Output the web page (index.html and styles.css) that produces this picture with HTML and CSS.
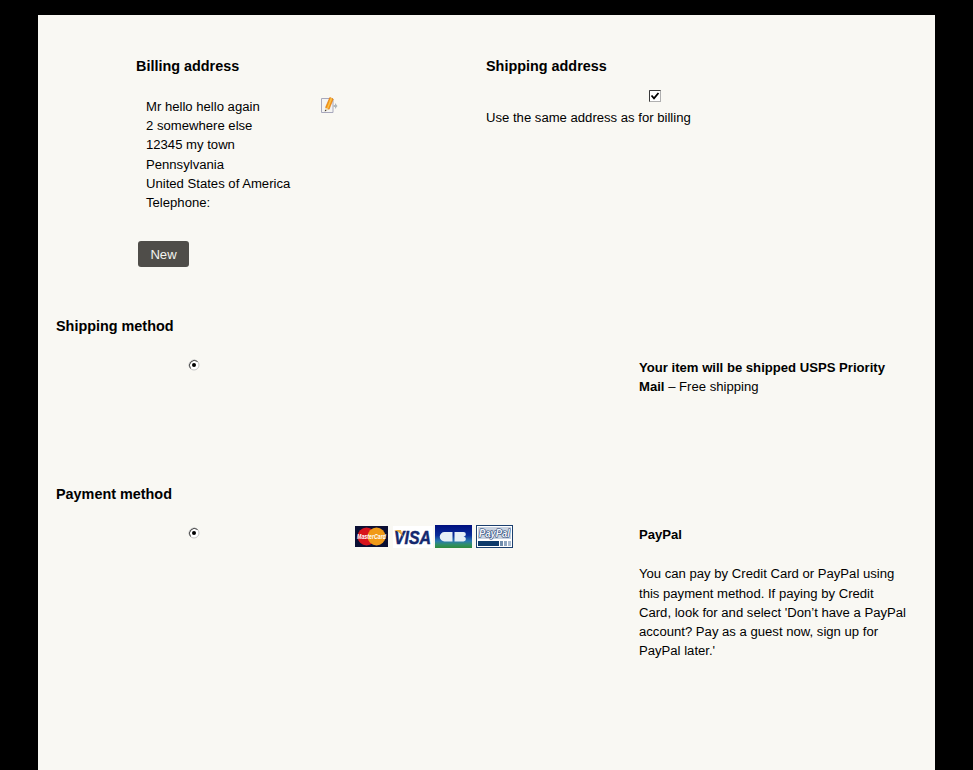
FILE: index.html
```html
<!DOCTYPE html>
<html lang="en">
<head>
<meta charset="utf-8">
<title>Checkout</title>
<link rel="stylesheet" href="styles.css">
</head>
<body>
<main class="page">
  <section class="addresses">
    <div class="billing">
      <h2 class="heading">Billing address</h2>
      <div class="address-row">
        <address class="address">
          Mr hello hello again<br>2 somewhere else<br>12345 my town<br>Pennsylvania<br>United States of America<br>Telephone:
        </address>
        <svg class="edit-icon" width="17" height="17" viewBox="0 0 17 17" aria-label="Edit">
          <path d="M.5 1.500h11l.5.500v13.500H.5z" fill="#f4f4f2" stroke="#a8a8bc"/>
          <path d="M12.500 8h1.500v-2l2.500 3-2.500 3v-2h-1.500z" fill="#b0b8bc"/>
          <path d="M4.500 10.500L8.800.5l3.400 1.500L8 12.500z" fill="#f59a14" stroke="#dc6e0a" stroke-width=".6"/>
          <path d="M9.800 .8l1.400.6L7 12l-1.200-.5z" fill="#fbc04a"/>
          <path d="M4.500 10.500L3.800 14.500 8 12.500z" fill="#e8d8b8"/>
          <path d="M3.800 14.500l.3-1.800 1.500.9z" fill="#3c3428"/>
        </svg>
      </div>
      <button class="new-button" type="button">New</button>
    </div>
    <div class="shipping">
      <h2 class="heading">Shipping address</h2>
      <div class="same-check">
        <svg class="check-icon" width="12" height="12" viewBox="0 0 12 12" aria-label="Checked">
          <rect x=".5" y=".5" width="11" height="11" fill="#fff" stroke="#b0b0b0"/>
          <path d="M.5 11.500v-11h11" fill="none" stroke="#3a3a3a"/>
          <path d="M2.500 5.500l2.500 2.800L9.500 3" fill="none" stroke="#000" stroke-width="1.800"/>
        </svg>
      </div>
      <p class="same-label">Use the same address as for billing</p>
    </div>
  </section>

  <section class="method shipping-method">
    <h2 class="heading">Shipping method</h2>
    <div class="method-row">
      <div class="radio-cell">
        <svg class="radio-icon" width="12" height="12" viewBox="0 0 12 12" aria-label="Selected">
          <circle cx="6" cy="6" r="5" fill="#fff" stroke="#c4c4c4"/>
          <path d="M2.500 9.500A5 5 0 0 1 9.500 2.500" fill="none" stroke="#444"/>
          <circle cx="6" cy="6" r="2" fill="#000"/>
        </svg>
      </div>
      <div class="logos-cell"></div>
      <div class="text-cell">
        <p class="shipping-note"><strong>Your item will be shipped USPS Priority Mail</strong> – Free shipping</p>
      </div>
    </div>
  </section>

  <section class="method payment-method">
    <h2 class="heading">Payment method</h2>
    <div class="method-row">
      <div class="radio-cell">
        <svg class="radio-icon" width="12" height="12" viewBox="0 0 12 12" aria-label="Selected">
          <circle cx="6" cy="6" r="5" fill="#fff" stroke="#c4c4c4"/>
          <path d="M2.500 9.500A5 5 0 0 1 9.500 2.500" fill="none" stroke="#444"/>
          <circle cx="6" cy="6" r="2" fill="#000"/>
        </svg>
      </div>
      <div class="logos-cell">
        <svg class="cards" width="160" height="24" viewBox="0 0 160 24" aria-label="Accepted cards">
          <defs>
            <linearGradient id="cb-fill" x1="0" y1="0" x2="0" y2="1">
              <stop offset="0" stop-color="#00107e"/>
              <stop offset=".45" stop-color="#0a2c9a"/>
              <stop offset=".7" stop-color="#2a7ab0"/>
              <stop offset=".85" stop-color="#2f8f68"/>
              <stop offset="1" stop-color="#2f8a3c"/>
            </linearGradient>
          </defs>
          <rect x="0" y="1" width="33" height="21" fill="#0b0f33"/>
          <circle cx="11.500" cy="11.500" r="9" fill="#d8141c"/>
          <circle cx="21.500" cy="11.500" r="9" fill="#f09a18"/>
          <text class="mc-word" x="16.500" y="14" text-anchor="middle" textLength="29" lengthAdjust="spacingAndGlyphs">MasterCard</text>
          <rect x="38" y="1" width="40" height="22" fill="#fff"/>
          <text class="visa-word" x="39" y="19" textLength="37" lengthAdjust="spacingAndGlyphs">VISA</text>
          <path d="M39 5h7l2 7c-2-3-5-6-9-7z" fill="#e8a93a"/>
          <rect x="80" y="0" width="37" height="23" fill="url(#cb-fill)"/>
          <path d="M97.500 7h-8a4.500 4.500 0 0 0 0 9.500h8zM99.500 7h9a2.300 2.300 0 0 1 0 4.700 2.300 2.300 0 0 1 0 4.800h-9z" fill="#e6f0f6"/>
          <rect x="121.500" y="0.500" width="36" height="22" fill="#fff" stroke="#1b3f6e"/>
          <rect x="123" y="2" width="33" height="12" fill="#c8d2e0"/>
          <text class="pp-word" x="139.500" y="12" text-anchor="middle" textLength="31" lengthAdjust="spacingAndGlyphs">PayPal</text>
          <rect x="123" y="16" width="21" height="5" fill="#0e3a6a"/>
          <rect x="145" y="16" width="3" height="5" fill="#6f8cab"/>
          <rect x="149" y="16" width="3" height="5" fill="#8fa6c0"/>
          <rect x="153" y="16" width="3" height="5" fill="#a9bbd0"/>
        </svg>
      </div>
      <div class="text-cell">
        <p class="paypal-title"><strong>PayPal</strong></p>
        <p class="paypal-copy">You can pay by Credit Card or PayPal using this payment method. If paying by Credit Card, look for and select 'Don’t have a PayPal account? Pay as a guest now, sign up for PayPal later.'</p>
      </div>
    </div>
  </section>
</main>
</body>
</html>
```
FILE: styles.css
```css
* { box-sizing: border-box; }

html, body {
  margin: 0;
  background: #000;
}

body {
  padding: 15px 38px 0;
  height: 770px;
  overflow: hidden;
  color: #000;
  font: 13.12px/19.2px "Liberation Sans", Arial, sans-serif;
}

.page {
  height: 755px;
  background: #f9f8f3;
  padding-top: 41px;
}

.heading {
  margin: 0;
  font-size: 14.4px;
  line-height: 20px;
  font-weight: bold;
}

.addresses {
  display: grid;
  grid-template-columns: 350px 1fr;
  padding-left: 98px;
}

.address-row {
  display: flex;
  align-items: flex-start;
  padding: 21px 0 0 10px;
}

.address {
  width: 175px;
  font-style: normal;
}

.new-button {
  display: block;
  margin: 29px 0 0 2px;
  width: 51px;
  height: 26px;
  padding: 2px 0 0;
  border: 0;
  border-radius: 3px;
  background: #4f4d49;
  color: #f4f4f0;
  font: 13.12px/24px "Liberation Sans", Arial, sans-serif;
}

.same-check {
  display: flex;
  padding: 14px 0 0 163px;
  height: 32px;
}

.check-icon { display: block; }

.same-label { margin: 0; }

.method { padding-left: 18px; }

.shipping-method { margin-top: 49px; }

.method-row {
  display: grid;
  grid-template-columns: 299px 284px 268px;
  padding-top: 21px;
}

.shipping-method .method-row { height: 148px; }

.radio-cell { padding: 2px 0 0 132px; }

.radio-icon { display: block; }

.cards { display: block; }

.text-cell p { margin: 0; }

.text-cell .shipping-note { margin-top: 1px; }

.text-cell .paypal-title { margin-bottom: 20px; }

.mc-word {
  font: italic bold 7px "Liberation Sans", Arial, sans-serif;
  fill: #fff;
}

.visa-word {
  font: italic bold 19px "Liberation Sans", Arial, sans-serif;
  fill: #14286e;
  stroke: #14286e;
  stroke-width: .5px;
}

.pp-word {
  font: italic bold 11px "Liberation Sans", Arial, sans-serif;
  fill: #f2f5fa;
  stroke: #16386e;
  stroke-width: 1.2px;
  paint-order: stroke;
}
```
